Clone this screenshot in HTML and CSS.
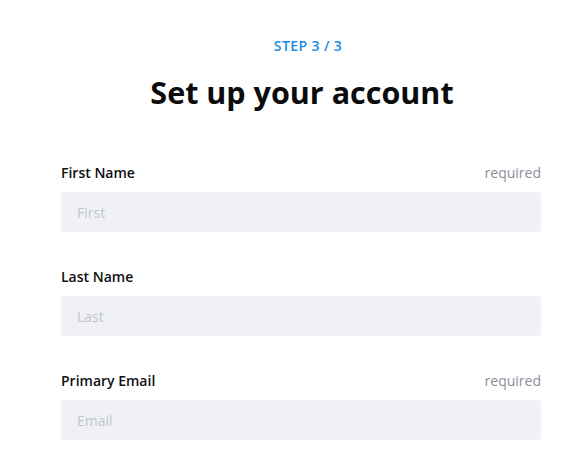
FILE: index.html
```html
<!DOCTYPE html>
<html>
<head>
<meta charset="utf-8">
<link rel="stylesheet" href="styles.css">
</head>
<body>
<div class="page">
  <div class="step">STEP 3 / 3</div>
  <h1 class="title">Set up your account</h1>
  <form class="form">
    <div class="field">
      <div class="label-row"><label class="label">First Name</label><span class="req">required</span></div>
      <input class="input" type="text" placeholder="First">
    </div>
    <div class="field">
      <div class="label-row"><label class="label">Last Name</label></div>
      <input class="input" type="text" placeholder="Last">
    </div>
    <div class="field">
      <div class="label-row"><label class="label">Primary Email</label><span class="req">required</span></div>
      <input class="input" type="text" placeholder="Email">
    </div>
  </form>
</div>
</body>
</html>
```
FILE: styles.css
```css
* { box-sizing: border-box; }
html, body { margin: 0; padding: 0; background: #fff; }
body { font-family: "Open Sans", "Noto Sans", sans-serif; color: #111; }
.page {
  width: 480px;
  margin-left: 61px;
  padding-top: 36px;
  display: flex;
  flex-direction: column;
}
.step {
  text-align: center;
  color: #1a8be8;
  font-size: 14px;
  font-weight: 600;
  letter-spacing: 0.4px;
  line-height: 19px;
  padding-left: 14px;
}
.title {
  margin: 17px 0 0;
  text-align: center;
  font-size: 30.5px;
  font-weight: 700;
  line-height: 40px;
  color: #0b0b0b;
  padding-left: 2px;
}
.form {
  margin-top: 51px;
  display: flex;
  flex-direction: column;
  gap: 35px;
}
.field { display: flex; flex-direction: column; }
.label-row {
  display: flex;
  justify-content: space-between;
  align-items: baseline;
  height: 20px;
  margin-bottom: 9px;
}
.label { font-size: 14px; font-weight: 600; line-height: 20px; color: #111; }
.req { font-size: 14px; color: #8a8d99; line-height: 20px; }
.input {
  height: 40px;
  border: none;
  border-radius: 4px;
  background: #f0f1f5;
  padding: 0 16px;
  font-family: inherit;
  font-size: 14px;
  color: #333;
  outline: none;
}
.input::placeholder { color: #c2c5d0; }
```
